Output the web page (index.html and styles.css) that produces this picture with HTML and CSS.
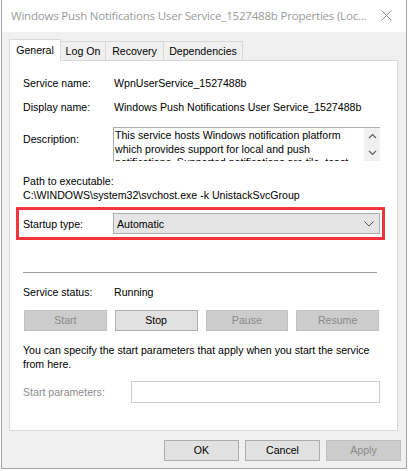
FILE: index.html
```html
<!DOCTYPE html>
<html>
<head>
<meta charset="utf-8">
<link rel="stylesheet" href="styles.css">
</head>
<body>
<div class="window">
  <div class="titlebar">
    <span class="title">Windows Push Notifications User Service_1527488b Properties (Loc...</span>
    <svg class="close" width="11" height="11" viewBox="0 0 11 11"><path d="M0.5 0.5 L10.5 10.5 M10.5 0.5 L0.5 10.5" stroke="#8a8a8a" stroke-width="1" fill="none"/></svg>
  </div>
  <div class="body">
    <div class="tabs">
      <div class="tab active">General</div>
      <div class="tab">Log On</div>
      <div class="tab">Recovery</div>
      <div class="tab">Dependencies</div>
    </div>
    <div class="panel">
      <div class="row r1"><span class="lbl">Service name:</span><span>WpnUserService_1527488b</span></div>
      <div class="row r2"><span class="lbl">Display name:</span><span>Windows Push Notifications User Service_1527488b</span></div>
      <div class="row r3">
        <span class="lbl desc-lbl">Description:</span>
        <div class="desc">
          <div class="desc-text">This service hosts Windows notification platform which provides support for local and push notifications. Supported notifications are tile, toast and raw.</div>
          <div class="scroll">
            <svg width="9" height="6" viewBox="0 0 9 6"><path d="M1 5 L4.5 1.5 L8 5" stroke="#606060" stroke-width="1.2" fill="none"/></svg>
            <svg width="9" height="6" viewBox="0 0 9 6"><path d="M1 1 L4.5 4.5 L8 1" stroke="#606060" stroke-width="1.2" fill="none"/></svg>
          </div>
        </div>
      </div>
      <div class="path-lbl">Path to executable:</div>
      <div class="path">C:\WINDOWS\system32\svchost.exe -k UnistackSvcGroup</div>
      <div class="highlight">
        <span class="lbl2">Startup type:</span>
        <div class="combo"><span>Automatic</span>
          <svg width="10" height="6" viewBox="0 0 10 6"><path d="M0.5 0.5 L5 5 L9.5 0.5" stroke="#555" stroke-width="1" fill="none"/></svg>
        </div>
      </div>
      <div class="sep"></div>
      <div class="row status"><span class="lbl">Service status:</span><span>Running</span></div>
      <div class="svc-buttons">
        <div class="btn disabled">Start</div>
        <div class="btn">Stop</div>
        <div class="btn disabled">Pause</div>
        <div class="btn disabled">Resume</div>
      </div>
      <div class="note">You can specify the start parameters that apply when you start the service from here.</div>
      <div class="params">
        <span class="params-lbl">Start parameters:</span>
        <div class="params-input"></div>
      </div>
    </div>
    <div class="footer">
      <div class="btn fbtn">OK</div>
      <div class="btn fbtn">Cancel</div>
      <div class="btn fbtn disabled">Apply</div>
    </div>
  </div>
</div>
</body>
</html>
```

FILE: styles.css
```css
html, body {
  margin: 0;
  padding: 0;
  background: #ffffff;
}
body {
  padding-left: 1px;
  font-family: "Liberation Sans", Arial, sans-serif;
  font-size: 10.6px;
  color: #000;
}
.window {
  width: 404px;
  height: 468px;
  border: 1px solid #a6a6a6;
  border-top: none;
  background: #f0f0f0;
  display: flex;
  flex-direction: column;
}
.titlebar {
  height: 32px;
  background: #ffffff;
  display: flex;
  align-items: center;
  padding-left: 9px;
  padding-right: 14px;
  flex: none;
}
.title {
  flex: 1;
  font-family: "Open Sans", "Noto Sans", sans-serif;
  font-size: 11.5px;
  color: #9a9a9a;
  white-space: nowrap;
  overflow: hidden;
  margin-top: -2px;
  letter-spacing: -0.2px;
}
.close {
  flex: none;
  margin-top: -2px;
}
.body {
  flex: 1;
  padding: 7px 8px 0 7px;
  display: flex;
  flex-direction: column;
}
.tabs {
  display: flex;
  align-items: flex-end;
  height: 21px;
}
.tab {
  height: 19px;
  border: 1px solid #d9d9d9;
  border-bottom: none;
  border-left: none;
  line-height: 19px;
  padding: 0;
  text-align: center;
  white-space: nowrap;
  background: #f0f0f0;
  box-sizing: border-box;
}
.tab:nth-child(2) { width: 45px; }
.tab:nth-child(3) { width: 58px; }
.tab:nth-child(4) { width: 79px; }
.tab.active {
  height: 22px;
  width: 52px;
  background: #ffffff;
  border-left: 1px solid #d9d9d9;
  line-height: 20px;
  position: relative;
  top: 1px;
}
.panel {
  width: 389px;
  height: 371px;
  box-sizing: border-box;
  border: 1px solid #d9d9d9;
  background: #ffffff;
  padding: 16px 0 0 13px;
}
.row {
  display: flex;
  line-height: 13px;
  height: 13px;
  white-space: nowrap;
}
.lbl {
  width: 91px;
  flex: none;
}
.r2 { margin-top: 11px; }
.r3 {
  margin-top: 13px;
  height: 34px;
}
.desc-lbl { padding-top: 6px; }
.desc {
  margin-left: -1px;
  width: 267px;
  height: 34px;
  border-top: 1px solid #adadad;
  border-left: 1px solid #adadad;
  box-sizing: border-box;
  display: flex;
  overflow: hidden;
}
.desc-text {
  flex: 1;
  padding: 1px 0 0 1px;
  line-height: 13.5px;
  white-space: normal;
}
.scroll {
  width: 16px;
  flex: none;
  background: #f0f0f0;
  display: flex;
  flex-direction: column;
  align-items: center;
  padding-top: 5px;
  gap: 11px;
  box-sizing: border-box;
}
.scroll svg { display: block; }
.path-lbl {
  margin-top: 13px;
  line-height: 14px;
}
.path {
  line-height: 14px;
}
.highlight {
  margin-top: 5px;
  margin-left: -7px;
  width: 369px;
  height: 33px;
  box-sizing: border-box;
  border: 3px solid #f2353b;
  display: flex;
  align-items: center;
  padding-left: 4px;
}
.lbl2 {
  width: 90px;
  flex: none;
}
.combo {
  width: 267px;
  height: 21px;
  box-sizing: border-box;
  background: #e5e5e5;
  border: 1px solid #adadad;
  display: flex;
  align-items: center;
  justify-content: space-between;
  padding: 0 5px 0 3px;
}
.sep {
  margin-top: 32px;
  width: 354px;
  height: 1px;
  background: #a0a0a0;
}
.status { margin-top: 13px; }
.svc-buttons {
  margin-top: 11px;
  margin-left: 1px;
  width: 355px;
  display: grid;
  grid-template-columns: repeat(4, 1fr);
  gap: 8px;
}
.btn {
  height: 21px;
  box-sizing: border-box;
  background: #e1e1e1;
  border: 1px solid #adadad;
  text-align: center;
  line-height: 19px;
}
.btn.disabled {
  background: #cccccc;
  border-color: #bfbfbf;
  color: #8a8a8a;
}
.note {
  margin-top: 12px;
  width: 360px;
  line-height: 14px;
}
.params {
  margin-top: 10px;
  display: flex;
  align-items: center;
}
.params-lbl {
  width: 108px;
  flex: none;
  color: #8d8d8d;
}
.params-input {
  width: 249px;
  height: 22px;
  box-sizing: border-box;
  border: 1px solid #cccccc;
  background: #ffffff;
}
.footer {
  display: flex;
  justify-content: flex-end;
  gap: 6px;
  padding: 9px 0 0 0;
  width: 392px;
}
.fbtn {
  width: 75px;
}
```
